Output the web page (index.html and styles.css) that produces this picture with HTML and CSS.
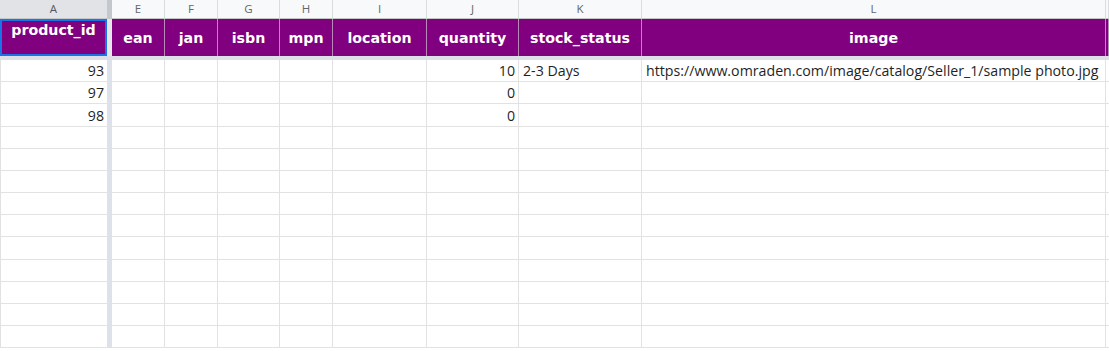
FILE: index.html
```html
<!DOCTYPE html>
<html>
<head>
<meta charset="utf-8">
<link rel="stylesheet" href="styles.css">
</head>
<body>
<div class="sheet">
  <div class="row letters">
    <div class="cell sel">A</div><div class="fz"></div>
    <div class="cell">E</div><div class="cell">F</div><div class="cell">G</div><div class="cell">H</div>
    <div class="cell">I</div><div class="cell">J</div><div class="cell">K</div><div class="cell">L</div><div class="cell"></div>
  </div>
  <div class="row head">
    <div class="cell first active">product_id</div><div class="fz"></div>
    <div class="cell">ean</div><div class="cell">jan</div><div class="cell">isbn</div><div class="cell">mpn</div>
    <div class="cell">location</div><div class="cell">quantity</div><div class="cell">stock_status</div><div class="cell">image</div><div class="cell"></div>
  </div>
  <div class="hfreeze"></div>
  <div class="row data">
    <div class="cell first num">93</div><div class="fz"></div>
    <div class="cell"></div><div class="cell"></div><div class="cell"></div><div class="cell"></div>
    <div class="cell"></div><div class="cell num">10</div><div class="cell txt">2-3 Days</div><div class="cell txt">https://www.omraden.com/image/catalog/Seller_1/sample photo.jpg</div><div class="cell"></div>
  </div>
  <div class="row data">
    <div class="cell first num">97</div><div class="fz"></div>
    <div class="cell"></div><div class="cell"></div><div class="cell"></div><div class="cell"></div>
    <div class="cell"></div><div class="cell num">0</div><div class="cell"></div><div class="cell"></div><div class="cell"></div>
  </div>
  <div class="row data tall">
    <div class="cell first num">98</div><div class="fz"></div>
    <div class="cell"></div><div class="cell"></div><div class="cell"></div><div class="cell"></div>
    <div class="cell"></div><div class="cell num">0</div><div class="cell"></div><div class="cell"></div><div class="cell"></div>
  </div>
  <div class="row data"><div class="cell first"></div><div class="fz"></div><div class="cell"></div><div class="cell"></div><div class="cell"></div><div class="cell"></div><div class="cell"></div><div class="cell"></div><div class="cell"></div><div class="cell"></div><div class="cell"></div></div>
  <div class="row data"><div class="cell first"></div><div class="fz"></div><div class="cell"></div><div class="cell"></div><div class="cell"></div><div class="cell"></div><div class="cell"></div><div class="cell"></div><div class="cell"></div><div class="cell"></div><div class="cell"></div></div>
  <div class="row data"><div class="cell first"></div><div class="fz"></div><div class="cell"></div><div class="cell"></div><div class="cell"></div><div class="cell"></div><div class="cell"></div><div class="cell"></div><div class="cell"></div><div class="cell"></div><div class="cell"></div></div>
  <div class="row data"><div class="cell first"></div><div class="fz"></div><div class="cell"></div><div class="cell"></div><div class="cell"></div><div class="cell"></div><div class="cell"></div><div class="cell"></div><div class="cell"></div><div class="cell"></div><div class="cell"></div></div>
  <div class="row data"><div class="cell first"></div><div class="fz"></div><div class="cell"></div><div class="cell"></div><div class="cell"></div><div class="cell"></div><div class="cell"></div><div class="cell"></div><div class="cell"></div><div class="cell"></div><div class="cell"></div></div>
  <div class="row data tall"><div class="cell first"></div><div class="fz"></div><div class="cell"></div><div class="cell"></div><div class="cell"></div><div class="cell"></div><div class="cell"></div><div class="cell"></div><div class="cell"></div><div class="cell"></div><div class="cell"></div></div>
  <div class="row data"><div class="cell first"></div><div class="fz"></div><div class="cell"></div><div class="cell"></div><div class="cell"></div><div class="cell"></div><div class="cell"></div><div class="cell"></div><div class="cell"></div><div class="cell"></div><div class="cell"></div></div>
  <div class="row data"><div class="cell first"></div><div class="fz"></div><div class="cell"></div><div class="cell"></div><div class="cell"></div><div class="cell"></div><div class="cell"></div><div class="cell"></div><div class="cell"></div><div class="cell"></div><div class="cell"></div></div>
  <div class="row data"><div class="cell first"></div><div class="fz"></div><div class="cell"></div><div class="cell"></div><div class="cell"></div><div class="cell"></div><div class="cell"></div><div class="cell"></div><div class="cell"></div><div class="cell"></div><div class="cell"></div></div>
  <div class="row data"><div class="cell first"></div><div class="fz"></div><div class="cell"></div><div class="cell"></div><div class="cell"></div><div class="cell"></div><div class="cell"></div><div class="cell"></div><div class="cell"></div><div class="cell"></div><div class="cell"></div></div>
</div>
</body>
</html>
```
FILE: styles.css
```css
html, body {
  margin: 0;
  padding: 0;
  background: #ffffff;
  overflow: hidden;
}
.sheet {
  width: 1109px;
  height: 351px;
  overflow: hidden;
  font-family: "Open Sans", "Liberation Sans", sans-serif;
}
.row {
  display: grid;
  grid-template-columns: 107px 5px 53px 53px 62px 53px 94px 92px 123px 464px 1fr;
}
.cell {
  box-sizing: border-box;
  overflow: visible;
  white-space: nowrap;
}
.fz {
  background: #dde1e9;
}

/* column letters */
.letters {
  height: 19px;
  background: #f8f9fa;
}
.letters .cell {
  border-right: 1px solid #dadce0;
  border-bottom: 1px solid #c4c7c5;
  font-size: 11.5px;
  line-height: 18px;
  color: #63666a;
  text-align: center;
}
.letters .cell.sel {
  background: #e1e3e6;
  color: #55585c;
  border-right: none;
}
.letters .fz {
  background: #c4c7cb;
}

/* header row */
.head {
  height: 36px;
}
.head .cell {
  background: #800080;
  color: #ffffff;
  font-family: "DejaVu Sans", Verdana, sans-serif;
  font-weight: bold;
  font-size: 14.2px;
  text-align: center;
  line-height: 36px;
  padding-top: 1px;
  border-right: 1px solid #b98ab9;
}
.head .cell.first {
  line-height: 18px;
  padding-top: 2px;
  border-right: none;
  box-shadow: inset 0 0 0 2px #1a73e8;
}
.head .fz {
  background: #e6e7ea;
}
.hfreeze {
  height: 5px;
  background: #dcdfe6;
  border-top: 1px solid #bdbfc4;
  box-sizing: border-box;
}

/* data rows */
.data {
  height: 22px;
}
.data.tall {
  height: 23px;
}
.data .cell {
  border-right: 1px solid #e2e2e2;
  border-bottom: 1px solid #e2e2e2;
  font-size: 14.2px;
  color: #1f1f1f;
  display: flex;
  align-items: flex-end;
  padding: 0 3px 0 4px;
  line-height: 20px;
}
.data .cell.first {
  border-left: 1px solid #e2e2e2;
  border-right: none;
}
.data .cell.num {
  justify-content: flex-end;
}
```
